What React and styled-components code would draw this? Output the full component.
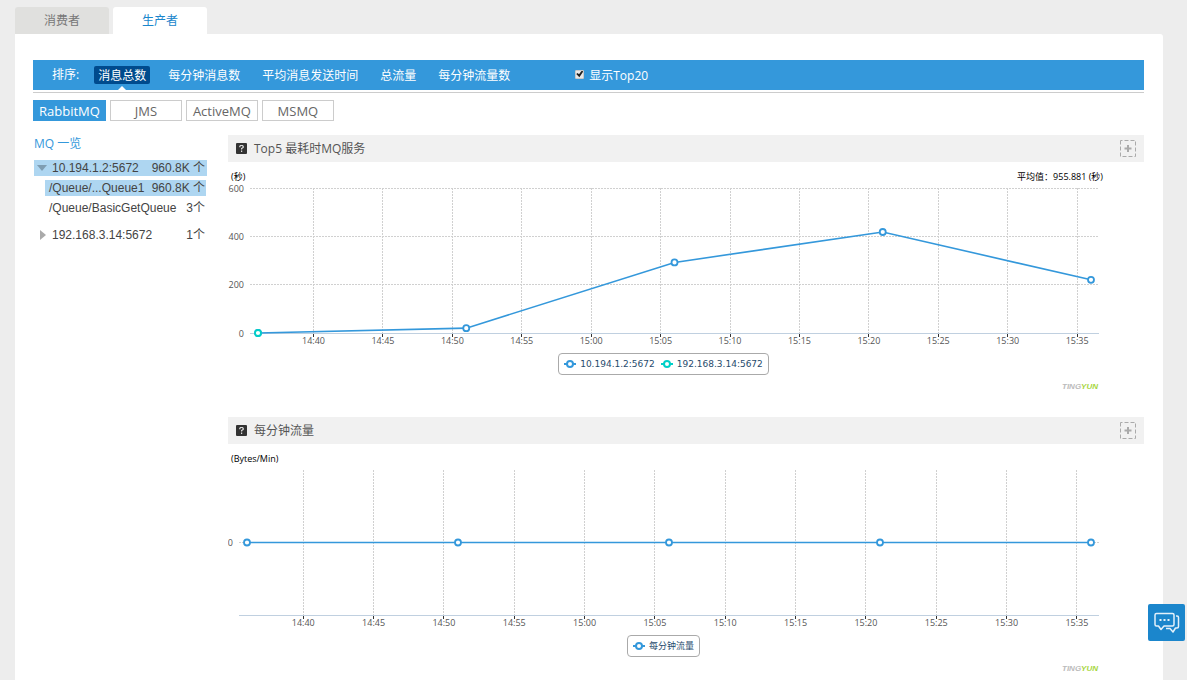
import React, { useLayoutEffect, useRef, useState } from "react";
import styled, { createGlobalStyle } from "styled-components";

const GlobalStyle = createGlobalStyle`
  * {
    box-sizing: border-box;
  }
  body {
    margin: 0;
    background: #ededed;
    color: #444;
    font-family: "Open Sans", "Noto Sans CJK SC", sans-serif;
    font-size: 12px;
    line-height: 18px;
  }
  button {
    font: inherit;
    cursor: pointer;
  }
`;

const Page = styled.div`
  display: flex;
  flex-direction: column;
  min-height: 100vh;
  padding: 7px 24px 0 15px;
`;

const PageTabs = styled.nav`
  display: flex;
  gap: 4px;
`;

const PageTab = styled.button`
  width: 94px;
  height: 27px;
  padding: 0;
  border: 0;
  border-radius: 3px 3px 0 0;
  background: ${(p) => (p.$active ? "#fff" : "#e0e0de")};
  color: ${(p) => (p.$active ? "#1b86cc" : "#777")};
`;

const Panel = styled.main`
  flex: 1;
  padding: 26px 19px 0 18px;
  border-radius: 0 3px 0 0;
  background: #fff;
`;

const SortBar = styled.div`
  display: flex;
  align-items: center;
  height: 30px;
  padding-left: 19px;
  background: #3498db;
  color: #fff;
  line-height: 20px;
`;

const SortList = styled.div`
  display: flex;
  gap: 14px;
  margin: 0 61px 0 15px;
`;

const SortItem = styled.button`
  position: relative;
  height: 18px;
  padding: 0 4px;
  border: 0;
  border-radius: 2px;
  background: ${(p) => (p.$active ? "#004b8d" : "transparent")};
  color: #fff;
  line-height: 20px;

  &::after {
    content: "";
    display: ${(p) => (p.$active ? "block" : "none")};
    position: absolute;
    left: 50%;
    bottom: -6px;
    margin-left: -4px;
    border: 4px solid transparent;
    border-top: 0;
    border-bottom-color: #fff;
  }
`;

const TopOnly = styled.label`
  display: flex;
  align-items: center;
  gap: 5px;
  padding-top: 2px;

  input {
    appearance: none;
    display: grid;
    place-items: center;
    width: 9px;
    height: 9px;
    margin: 0 0 4px;
    border: 1px solid #c9c9c9;
    border-radius: 1px;
    background: #e8e8e8;
  }
  input:checked::before {
    content: "";
    width: 7px;
    height: 7px;
    background: #222;
    clip-path: polygon(0 50%, 20% 35%, 40% 55%, 80% 0, 100% 15%, 45% 95%);
  }
`;

const Rule = styled.hr`
  height: 1px;
  margin: 2px 0 7px;
  border: 0;
  background: #ccc;
`;

const QueueTabs = styled.div`
  display: flex;
  gap: 4px;
`;

const QueueTab = styled.button`
  min-width: 72px;
  height: 21px;
  padding: 0 5px;
  border: 1px solid ${(p) => (p.$active ? "#3498db" : "#ccc")};
  background: ${(p) => (p.$active ? "#3498db" : "#fff")};
  color: ${(p) => (p.$active ? "#fff" : "#666")};
  font-size: 13px;
  line-height: 18px;
`;

const Columns = styled.div`
  display: grid;
  grid-template-columns: 174px minmax(0, 1fr);
  column-gap: 21px;
  padding-top: 14px;
`;

const SideTitle = styled.h2`
  margin: 0 0 7px 1px;
  color: #3498db;
  font-size: 12px;
  font-weight: 400;
  line-height: 18px;
`;

const Tree = styled.ul`
  display: grid;
  gap: 4px;
  margin: 0;
  padding: 0 0 0 1px;
  list-style: none;
  font-family: "Liberation Sans", "Noto Sans CJK SC", sans-serif;

  ul {
    padding: 4px 1px 7px 11px;
  }
`;

const TreeRow = styled.button`
  display: flex;
  align-items: center;
  width: 100%;
  height: 16px;
  padding: 0 ${(p) => (p.$leaf ? 1 : 2)}px 0 ${(p) => (p.$leaf ? 4 : 3)}px;
  border: 0;
  background: ${(p) => (p.$active ? "#aed6f1" : "transparent")};
  color: #444;
  line-height: 16px;
  white-space: nowrap;

  svg {
    flex: none;
    margin-right: 4px;
  }
  span:last-child {
    margin-left: auto;
  }
`;

const Charts = styled.div`
  display: grid;
  align-content: start;
  gap: 25px;
`;

const ChartHead = styled.header`
  display: flex;
  align-items: center;
  height: 27px;
  padding: 0 8px;
  background: #f1f1f1;
  color: #555;

  h3 {
    margin: 0 auto 0 7px;
    font-size: 12px;
    font-weight: 400;
  }
`;

const IconButton = styled.button`
  display: block;
  padding: 0;
  border: 0;
  background: none;
  line-height: 0;
`;

const Plot = styled.svg`
  display: block;
  width: 100%;
  height: 191px;
  font-size: 9px;

  .grid {
    stroke: #d0d0d0;
    stroke-dasharray: 2 1;
  }
  .axis {
    stroke: #c0d0e0;
  }
  .tick {
    stroke: #333;
  }
  .label {
    fill: #555;
  }
`;

const Foot = styled.footer`
  padding-right: 45px;
`;

const Legend = styled.div`
  display: flex;
  align-items: center;
  gap: 6px;
  width: max-content;
  height: 22px;
  margin: 0 auto;
  padding: 0 5px;
  border: 1px solid #aaa;
  border-radius: 4px;
  color: #274b6d;
  font-family: "DejaVu Sans", "Noto Sans CJK SC", sans-serif;
  font-size: 9px;
  line-height: 12px;

  span {
    display: flex;
    align-items: center;
    gap: 4px;
  }
`;

const Brand = styled.p`
  margin: 7px 1px 0 0;
  color: #bbb;
  font: italic bold 8px/10px "Liberation Sans", Arial, sans-serif;
  text-align: right;

  b {
    color: #a6d63c;
  }
`;

const ChatButton = styled.button`
  display: grid;
  place-items: center;
  position: fixed;
  right: 2px;
  bottom: 39px;
  width: 37px;
  height: 37px;
  padding: 0;
  border: 0;
  border-radius: 2px;
  background: #1b86cc;
`;

const BLUE = "#3498db";
const TEAL = "#00d0c8";

const sorts = ["消息总数", "每分钟消息数", "平均消息发送时间", "总流量", "每分钟流量数"];
const queues = ["RabbitMQ", "JMS", "ActiveMQ", "MSMQ"];

// x is minutes since 14:36
const costSeries = [
  { name: "10.194.1.2:5672", color: BLUE, points: [[0, 0], [15, 20], [30, 292], [45, 418], [60, 220]] },
  { name: "192.168.3.14:5672", color: TEAL, points: [[0, 0]] },
];
const flowSeries = [
  { name: "每分钟流量", color: BLUE, points: [[0, 0], [15, 0], [30, 0], [45, 0], [60, 0]] },
];

const times = Array.from({ length: 12 }, (_, i) => {
  const minutes = 14 * 60 + 40 + i * 5;
  const label = `${Math.floor(minutes / 60)}:${String(minutes % 60).padStart(2, "0")}`;
  return { offset: 4 + i * 5, label };
});

const Arrow = ({ open }) => (
  <svg width="11" height="10" viewBox="0 0 11 10">
    {open ? <path d="M0 2h10L5 8z" fill="#7f9db2" /> : <path d="M3 0v10l6-5z" fill="#aaa" />}
  </svg>
);

const HelpIcon = () => (
  <svg width="11" height="11" viewBox="0 0 11 11">
    <rect width="11" height="11" rx="1" fill="#333" />
    <path d="M3.8 4.2V3.3L4.6 2.5H6.4L7.2 3.3V4.4L5.6 5.6V6.6M5.6 7.6V9" fill="none" stroke="#ddd" strokeWidth="1.2" />
  </svg>
);

const AddIcon = () => (
  <svg width="16" height="17" viewBox="0 0 16 17">
    <rect x=".5" y=".5" width="15" height="16" fill="none" stroke="#aaa" strokeDasharray="4 2" strokeDashoffset="2" />
    <path d="M8 5v7M4.5 8.5h7" stroke="#aaa" strokeWidth="2" />
  </svg>
);

const ChatIcon = () => (
  <svg width="26" height="22" viewBox="0 0 26 22" fill="none" stroke="#e4f1fa" strokeWidth="1.5" strokeLinejoin="round">
    <path d="M2.5 1.5h16Q20 1.5 20 3v9.500q0 1.500-1.500 1.500H10L7 17.500 4.500 14h-2Q1 14 1 12.500V3q0-1.500 1.500-1.500z" />
    <path d="M22 4h1q1.500 0 1.500 1.500v9q0 1.500-1.500 1.500h-1.500L19 20l-3-3.500h-4" />
    <path d="M5.500 8h2M9.500 8h2M13.500 8h2" strokeWidth="2" />
  </svg>
);

const useWidth = () => {
  const ref = useRef(null);
  const [width, setWidth] = useState(916);
  useLayoutEffect(() => {
    const update = () => setWidth(ref.current.getBoundingClientRect().width);
    update();
    window.addEventListener("resize", update);
    return () => window.removeEventListener("resize", update);
  }, []);
  return [ref, width];
};

const TOP = 26;
const BOTTOM = 171;

const LineChart = ({ title, unit, average, series, left, min, max, yTicks }) => {
  const [ref, width] = useWidth();
  const right = width - 45;
  const x = (m) => left + 8 + (m / 60) * (right - left - 16);
  const y = (v) => BOTTOM - ((v - min) / (max - min)) * (BOTTOM - TOP);
  const snap = (n) => Math.floor(n) + 0.5;

  return (
    <section>
      <ChartHead>
        <HelpIcon />
        <h3>{title}</h3>
        <IconButton aria-label="添加">
          <AddIcon />
        </IconButton>
      </ChartHead>
      <Plot ref={ref}>
        <text x="3" y="18">{unit}</text>
        {average && (
          <text x={right + 4} y="18" textAnchor="end">{average}</text>
        )}
        {yTicks.map((v) => (
          <g key={v}>
            <line className={v === min ? "axis" : "grid"} x1={left} x2={right} y1={snap(y(v))} y2={snap(y(v))} />
            <text className="label" x={left - 6} y={snap(y(v)) + 3} textAnchor="end">{v}</text>
          </g>
        ))}
        {times.map((t) => (
          <g key={t.label}>
            <line className="grid" x1={snap(x(t.offset))} x2={snap(x(t.offset))} y1={TOP} y2={BOTTOM} />
            <line className="tick" x1={snap(x(t.offset))} x2={snap(x(t.offset))} y1={BOTTOM + 1} y2={BOTTOM + 4} />
            <text className="label" x={x(t.offset)} y={BOTTOM + 11} textAnchor="middle">{t.label}</text>
          </g>
        ))}
        <line className="axis" x1={left} x2={right} y1={BOTTOM + 0.5} y2={BOTTOM + 0.5} />
        {series.map((s) => (
          <g key={s.name} stroke={s.color} fill="none">
            <polyline points={s.points.map(([m, v]) => `${x(m)},${y(v)}`).join(" ")} strokeWidth="1.6" />
            {s.points.map(([m, v]) => (
              <circle key={m} cx={x(m)} cy={y(v)} r="3" fill="#fff" strokeWidth="1.8" />
            ))}
          </g>
        ))}
      </Plot>
      <Foot>
        <Legend>
          {series.map((s) => (
            <span key={s.name}>
              <svg width="12" height="8" viewBox="0 0 12 8" stroke={s.color} strokeWidth="2">
                <path d="M0 4h12" />
                <circle cx="6" cy="4" r="3" fill="#fff" />
              </svg>
              {s.name}
            </span>
          ))}
        </Legend>
        <Brand>TING<b>YUN</b></Brand>
      </Foot>
    </section>
  );
};

const App = () => {
  const [sort, setSort] = useState(sorts[0]);
  const [queue, setQueue] = useState(queues[0]);

  return (
    <>
      <GlobalStyle />
      <Page>
        <PageTabs>
          <PageTab>消费者</PageTab>
          <PageTab $active>生产者</PageTab>
        </PageTabs>
        <Panel>
          <SortBar>
            <span>排序:</span>
            <SortList>
              {sorts.map((s) => (
                <SortItem key={s} $active={s === sort} onClick={() => setSort(s)}>
                  {s}
                </SortItem>
              ))}
            </SortList>
            <TopOnly>
              <input type="checkbox" defaultChecked />
              显示Top20
            </TopOnly>
          </SortBar>
          <Rule />
          <QueueTabs>
            {queues.map((q) => (
              <QueueTab key={q} $active={q === queue} onClick={() => setQueue(q)}>
                {q}
              </QueueTab>
            ))}
          </QueueTabs>
          <Columns>
            <aside>
              <SideTitle>MQ 一览</SideTitle>
              <Tree>
                <li>
                  <TreeRow $active>
                    <Arrow open />
                    <span>10.194.1.2:5672</span>
                    <span>960.8K 个</span>
                  </TreeRow>
                  <Tree as="ul">
                    <li>
                      <TreeRow $leaf $active>
                        <span>/Queue/...Queue1</span>
                        <span>960.8K 个</span>
                      </TreeRow>
                    </li>
                    <li>
                      <TreeRow $leaf>
                        <span>/Queue/BasicGetQueue</span>
                        <span>3个</span>
                      </TreeRow>
                    </li>
                  </Tree>
                </li>
                <li>
                  <TreeRow>
                    <Arrow />
                    <span>192.168.3.14:5672</span>
                    <span>1个</span>
                  </TreeRow>
                </li>
              </Tree>
            </aside>
            <Charts>
              <LineChart
                title="Top5 最耗时MQ服务"
                unit="(秒)"
                average="平均值：955.881 (秒)"
                series={costSeries}
                left={22}
                min={0}
                max={600}
                yTicks={[0, 200, 400, 600]}
              />
              <LineChart
                title="每分钟流量"
                unit="(Bytes/Min)"
                series={flowSeries}
                left={11}
                min={-1}
                max={1}
                yTicks={[0]}
              />
            </Charts>
          </Columns>
        </Panel>
      </Page>
      <ChatButton aria-label="在线咨询">
        <ChatIcon />
      </ChatButton>
    </>
  );
};

export default App;
